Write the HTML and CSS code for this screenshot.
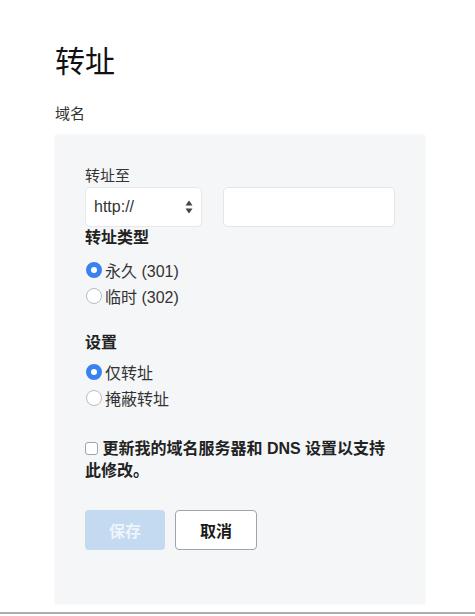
FILE: index.html
```html
<!DOCTYPE html>
<html lang="zh-CN">
<head>
<meta charset="utf-8">
<title>转址</title>
<link rel="stylesheet" href="styles.css">
</head>
<body>
<div class="page">
  <h1 class="title">转址</h1>
  <div class="domain-label">域名</div>
  <div class="panel">
    <div class="field-label">转址至</div>
    <div class="url-row">
      <div class="select">
        <span class="select-text">http://</span>
        <svg class="select-arrows" width="8" height="14" viewBox="0 0 8 14">
          <path d="M4 0.5 L7.5 5.5 L0.5 5.5 Z" fill="#444"/>
          <path d="M4 13.5 L7.5 8.5 L0.5 8.5 Z" fill="#444"/>
        </svg>
      </div>
      <div class="text-input"></div>
    </div>
    <div class="section-title">转址类型</div>
    <div class="radio-group">
      <div class="radio-row"><span class="radio checked"></span><span>永久 (301)</span></div>
      <div class="radio-row"><span class="radio"></span><span>临时 (302)</span></div>
    </div>
    <div class="section-title section-gap">设置</div>
    <div class="radio-group radio-group-tight">
      <div class="radio-row"><span class="radio checked"></span><span>仅转址</span></div>
      <div class="radio-row"><span class="radio"></span><span>掩蔽转址</span></div>
    </div>
    <div class="check-text"><span class="checkbox"></span> 更新我的域名服务器和 DNS 设置以支持此修改。</div>
    <div class="buttons">
      <div class="btn btn-save">保存</div>
      <div class="btn btn-cancel">取消</div>
    </div>
  </div>
  <div class="bottom-line"></div>
</div>
</body>
</html>
```
FILE: styles.css
```css
html, body {
  margin: 0;
  padding: 0;
  background: #ffffff;
}
body {
  font-family: "Liberation Sans", "Noto Sans CJK SC", sans-serif;
  color: #222;
}
.page {
  padding: 44px 50px 0 55px;
}
.title {
  margin: 0;
  font-size: 30px;
  line-height: 36px;
  font-weight: 400;
  color: #111;
}
.domain-label {
  margin-top: 23px;
  font-size: 15px;
  line-height: 22px;
  color: #333;
}
.panel {
  margin-top: 10px;
  background: #f5f6f8;
  box-shadow: 0 0 2px rgba(0, 0, 0, 0.06);
  padding: 30px 30px 55px 30px;
  height: 384px;
}
.field-label {
  font-size: 15px;
  line-height: 22px;
  color: #333;
}
.url-row {
  display: flex;
  gap: 21px;
}
.select {
  width: 117px;
  height: 40px;
  box-sizing: border-box;
  background: #fff;
  border: 1px solid #e6e8eb;
  border-radius: 5px;
  display: flex;
  align-items: center;
  justify-content: space-between;
  padding: 0 8px;
}
.select-text {
  font-size: 16px;
  color: #333;
}
.select-arrows {
  display: block;
}
.text-input {
  width: 173px;
  height: 40px;
  box-sizing: border-box;
  background: #fff;
  border: 1px solid #e3e5e8;
  border-radius: 5px;
}
.section-title {
  font-size: 16px;
  line-height: 22px;
  font-weight: 700;
  color: #222;
}
.section-gap {
  margin-top: 23px;
}
.radio-group {
  margin-top: 8px;
}
.radio-group-tight {
  margin-top: 5px;
}
.radio-row {
  display: flex;
  align-items: center;
  height: 26px;
  font-size: 16px;
  color: #333;
  gap: 3px;
}
.radio {
  width: 16px;
  height: 16px;
  box-sizing: border-box;
  border-radius: 50%;
  border: 1px solid #b8bcc2;
  background: #fff;
  margin-left: 1px;
  flex: none;
}
.radio.checked {
  border: 5px solid #3a82f0;
  background: #fff;
}
.check-text {
  margin-top: 27px;
  font-size: 16px;
  line-height: 22px;
  font-weight: 700;
  color: #222;
}
.checkbox {
  display: inline-block;
  width: 13px;
  height: 13px;
  box-sizing: border-box;
  border: 1px solid #9ea3a9;
  border-radius: 3px;
  background: #fff;
  vertical-align: -1px;
}
.buttons {
  margin-top: 28px;
  display: flex;
  gap: 10px;
}
.btn {
  height: 40px;
  box-sizing: border-box;
  border-radius: 4px;
  display: flex;
  align-items: center;
  justify-content: center;
  font-size: 16px;
  font-weight: 700;
}
.btn-save {
  width: 80px;
  background: #c3daf1;
  color: #eef5fc;
}
.btn-cancel {
  width: 82px;
  background: #fff;
  border: 1px solid #9ba4ae;
  color: #1a1a1a;
}
.bottom-line {
  margin: 8px -50px 0 -55px;
  border-top: 2px solid #adadad;
}
```
